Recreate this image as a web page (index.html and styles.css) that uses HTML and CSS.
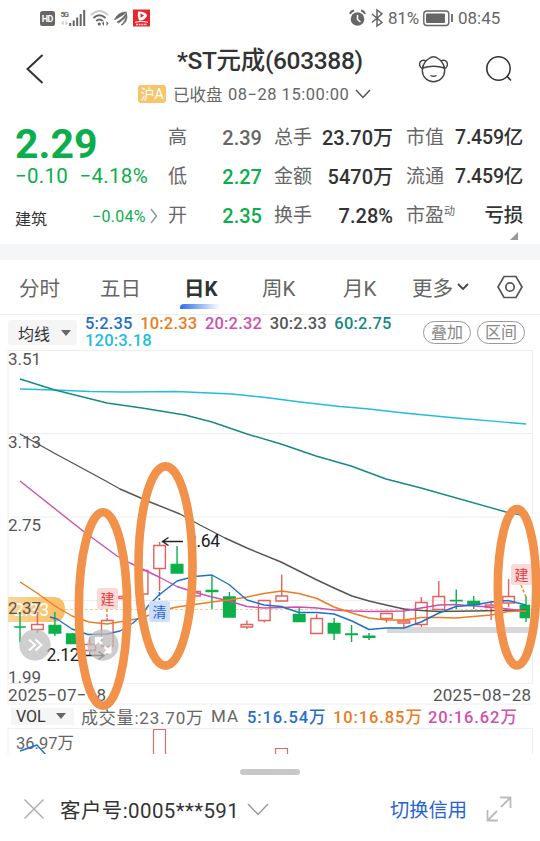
FILE: index.html
```html
<!DOCTYPE html>
<html lang="zh-CN">
<head>
    <meta charset="UTF-8">
    <meta name="viewport" content="width=device-width, initial-scale=1.0">
    <title>*ST元成(603388)</title>
    <link rel="stylesheet" href="styles.css">
</head>
<body>
    <div class="status-bar">
        <svg class="status-left" width="120" height="20" viewBox="36 8 120 20">
            <rect x="40" y="11" width="15" height="15" rx="2.5" fill="#666"/>
            <text x="41.8" y="22" class="hd" textLength="11.5">HD</text>
            <text x="60.5" y="17" class="five-g" textLength="8.5">5G</text>
            <path d="M61 23h3m-1-2v4m3-4v4m0-2h2" stroke="#ccc" fill="none"/>
            <path d="M70.2 23v3M73.7 20.5V26M77.2 17.5V26M80.7 14V26M84.2 10V26" stroke="#666" stroke-width="2" fill="none"/>
            <path d="M91 15q8.500-8 17 0" stroke="#ccc" stroke-width="2" fill="none"/>
            <path d="M93.500 18q6-5.500 12 0M96.300 21q3.200-3 6.400 0" stroke="#666" stroke-width="2" fill="none"/>
            <circle cx="99.300" cy="24" r="1.600" fill="#666"/>
            <path d="M104 21v5l-2-2.500zM106.500 21v5l2-2.500z" fill="#666"/>
            <path d="M114.500 19.500q4-8 12-7.500q-3 3-11 7.500zM117 22q6-3 9.500-9.500q1 5-8 10.500zM121 25q5-4 5.500-11q2 6-4 11z" fill="#666" stroke="#666" stroke-width=".6"/>
            <rect x="133" y="9.500" width="17" height="17" fill="#e8262b"/>
            <path d="M138 11.500q9 0 9 4.500q-3 5-8 4.500q-2-4-1-9z" fill="#fff"/>
            <path d="M140.500 13.500l3.500 2l-3.500 2.200z" fill="#e8262b"/>
            <path d="M135 22.300q6.500-2 13 0" stroke="#fff" fill="none"/>
            <path d="M136 24.600h11" stroke="#fff" stroke-width="1.500" stroke-dasharray="2 .6" opacity=".8"/>
        </svg>
        <div class="status-right">
            <svg width="36" height="20" viewBox="348 8 36 20">
                <circle cx="357.500" cy="19" r="6.800" fill="#666"/>
                <path d="M357.500 15v4.500l3 2.500" stroke="#fff" stroke-width="1.500" fill="none"/>
                <path d="M350 14q1-3 4-3.500M361 10.500q3 .5 4 3.500" stroke="#666" stroke-width="1.800" fill="none"/>
                <path d="M372 14l10 8.500l-5 3.500V10l5 3.800l-10 8.700" stroke="#666" stroke-width="1.500" fill="none"/>
            </svg>
            <span class="battery-pct">81%</span>
            <svg width="31" height="18" viewBox="422 9 31 18">
                <rect x="423.800" y="11" width="25" height="14.500" rx="3" fill="none" stroke="#666" stroke-width="1.400"/>
                <rect x="426" y="13.500" width="19" height="9.500" rx="1" fill="#666"/>
                <path d="M452 14v8" stroke="#666" stroke-width="1.800"/>
            </svg>
            <span class="clock">08:45</span>
        </div>
    </div>

    <header class="header">
        <svg class="back" width="20" height="32" viewBox="25 53 20 32">
            <path d="M42.500 55L27.500 69L42.500 83" stroke="#333" stroke-width="2" fill="none"/>
        </svg>
        <div class="title-box">
            <h1 class="title">*ST元成(603388)</h1>
            <div class="subtitle">
                <span class="market">沪A</span>
                <span class="state">已收盘</span>
                <span class="time">08−28 15:00:00</span>
                <svg width="16" height="10" viewBox="0 0 16 10"><path d="M1 1l7 7.500L15 1" stroke="#555" stroke-width="1.500" fill="none"/></svg>
            </div>
        </div>
        <svg class="avatar" width="30" height="28" viewBox="418 55 30 28" fill="none" stroke="#444" stroke-width="1.400">
            <circle cx="433.500" cy="70.500" r="11.200"/>
            <path d="M422.500 68q11-3.500 22 0q-2-7-6.500-9.500q-4.500-3.500-9 0q-4.500 2.500-6.500 9.500z" fill="#fff"/>
            <path d="M426 61c-3-2-6.500 0-6.500 3.500q.2 3 3 3.800M441 61c3-2 6.500 0 6.500 3.500q-.2 3-3 3.800M430.500 75.500q3 1.600 6 0"/>
        </svg>
        <svg class="search" width="28" height="28" viewBox="485 55 28 28" fill="none" stroke="#333" stroke-width="1.600">
            <circle cx="498.500" cy="68.500" r="11.700"/>
            <path d="M507 76.500l4 4"/>
        </svg>
    </header>

    <section class="quote">
        <div class="price-box">
            <div class="price">2.29</div>
            <div class="change"><span>−0.10</span><span>−4.18%</span></div>
            <div class="sector">
                <span class="sector-name">建筑</span>
                <span class="sector-change">−0.04%</span>
                <svg width="8" height="16" viewBox="0 0 8 16"><path d="M1 1l5.500 7L1 15" stroke="#999" stroke-width="1.500" fill="none"/></svg>
            </div>
        </div>
        <dl class="stats stats-price">
            <dt>高</dt><dd class="muted">2.39</dd>
            <dt>低</dt><dd class="green">2.27</dd>
            <dt>开</dt><dd class="green">2.35</dd>
        </dl>
        <dl class="stats stats-volume">
            <dt>总手</dt><dd>23.70万</dd>
            <dt>金额</dt><dd>5470万</dd>
            <dt>换手</dt><dd>7.28%</dd>
        </dl>
        <dl class="stats stats-value">
            <dt>市值</dt><dd>7.459亿</dd>
            <dt>流通</dt><dd>7.459亿</dd>
            <dt>市盈<sup>动</sup></dt><dd>亏损</dd>
        </dl>
        <span class="corner"></span>
    </section>

    <nav class="tabs">
        <a class="tab">分时</a>
        <a class="tab">五日</a>
        <a class="tab active">日K</a>
        <a class="tab">周K</a>
        <a class="tab">月K</a>
        <a class="tab more">更多
            <svg width="12" height="8" viewBox="0 0 12 8"><path d="M1 1l5 5l5-5" stroke="#444" stroke-width="1.800" fill="none"/></svg>
        </a>
        <svg class="settings" width="26" height="24" viewBox="497 275 26 24" fill="none" stroke="#555" stroke-width="1.700">
            <path d="M504 276.500h12l6 10.500l-6 10.500h-12l-6-10.500z"/>
            <circle cx="510" cy="287" r="4.200"/>
        </svg>
    </nav>

    <div class="ma-row">
        <div class="select ma-select">均线<i class="caret"></i></div>
        <div class="ma-values">
            <span class="c5">5:2.35</span>
            <span class="c10">10:2.33</span>
            <span class="c20">20:2.32</span>
            <span class="c30">30:2.33</span>
            <span class="c60">60:2.75</span>
            <span class="c120">120:3.18</span>
        </div>
        <div class="pills">
            <span class="pill">叠加</span>
            <span class="pill">区间</span>
        </div>
    </div>

    <svg class="chart" width="540" height="354" viewBox="0 350 540 354">
        <defs>
            <linearGradient id="flag" x1="0" x2="1">
                <stop offset="0" stop-color="#fbd796"/>
                <stop offset="1" stop-color="#f9bd68"/>
            </linearGradient>
        </defs>
        <path class="grid" d="M8 350.500H532.500M8 433.500H532.500M8 517H532.500M8 600.500H532.500M8 683.500H532.500M8 704H532.500M8 350V704M532.500 350V684"/>
        <path d="M8 597H53q12 0 12 12.500t-12 12.500H8z" fill="url(#flag)"/>
        <text class="flag-text" x="14" y="615.500" textLength="35">2.33</text>
        <path class="last-price" d="M65 609.500H532"/>
        <rect x="387" y="627" width="142" height="6" fill="#d8d8d8"/>

        <g id="candles"></g>

        <polyline class="line" stroke="#21bde0" points="20,389 55,390 90,391.500 125,392 176,391.500 232,394 270,398 300,402 340,406.500 369,409 404,413 456,418 526,424"/>
        <polyline class="line" stroke="#148a85" points="20,379 55,390 107,403 142,408 185,415 212,422 247,434 281,444 316,456 351,466 386,479 421,488 506,512 526,516"/>
        <polyline class="line" stroke="#555" points="20,434 54,453 104,480 120,489 150,502 180,514 200,525 225,538 247,548 281,562 299,571 317,580 334,588 352,596 369,601 386,605 404,609 421,610.500 439,611.500 474,611 526,610"/>
        <polyline class="line" stroke="#cf4fb0" points="20,481 83,531 117,556 130,563 159,577 177,586.500 194,592 212,597 229,601 247,606.500 264,608 281,607.500 299,607 317,608 334,610 352,611 369,611.500 404,611 421,608 439,605 456,604.500 474,606 491,607 508,609 526,611"/>
        <polyline class="line" stroke="#ea7c22" points="20,582 37,593 55,606 72,616 89,622 107,624 125,621 142,618 159,611 177,607 212,602 229,600 247,597 264,593.500 281.600,591 299,593.500 317,598.500 334,607 352,613 369,618 386,620 404,620 421,617.500 439,617.500 456,618 491,615 508,611.500 526,611"/>
        <polyline class="line" stroke="#1f6fc9" points="50,617 57,619 72,629 88,634.500 107,634 120,631 133,623 142,615 148,606 159,595 177,581 194,576.500 212,575 229,584.500 247,600 264,605 281,606.500 299,612.500 317,612.500 334,614 352,621 369,629.500 386,628 404,628 421,622 439,613 456,606.500 474,605 491,602 508,600.500 526,605"/>

        <g class="axis">
            <text x="8" y="364.500" textLength="33">3.51</text>
            <text x="8" y="448" textLength="33">3.13</text>
            <text x="8" y="530.500" textLength="33">2.75</text>
            <text x="8" y="613.500" textLength="33">2.37</text>
            <text x="8" y="683" textLength="33">1.99</text>
            <text x="8" y="700.500" textLength="98">2025−07−18</text>
            <text x="433" y="700.500" textLength="98">2025−08−28</text>
        </g>

        <text class="extreme" x="46.500" y="661" textLength="33">2.12</text>
        <path class="arrow" d="M80 655.500H104M98.500 651.500l5.500 4l-5.500 4"/>
        <text class="extreme" x="187" y="547" textLength="33">2.64</text>
        <path class="arrow" d="M183 541.500H163M168.500 537.500l-6 4l6 4"/>

        <circle cx="35" cy="645" r="15.700" fill="#bbb" opacity=".7"/>
        <path d="M29 639.500l6 5.500l-6 5.500M35.500 639.500l6 5.500l-6 5.500" stroke="#fff" stroke-width="2" fill="none"/>
        <circle cx="103" cy="645" r="15.700" fill="#bbb" opacity=".75"/>
        <path d="M97 639l5 5M104.500 646.500l5 5" stroke="#fff" stroke-width="2.500"/>
        <path d="M95 637h8.500l-8.500 8.500zM111.500 653.500h-8.500l8.500-8.500z" fill="#fff"/>

        <path class="lead" d="M107 609V620M521 585L526 597"/>
        <path d="M159.400 592V600" stroke="#1f6fc9" stroke-width="1.500" stroke-dasharray="4 2"/>
        <g class="mark">
            <rect x="97" y="588" width="21" height="21" rx="2.500" fill="#fcd9d9"/>
            <text x="107.500" y="604" fill="#e23b3b">建</text>
            <rect x="149" y="601" width="21" height="21" rx="2.500" fill="#cfdffb"/>
            <text x="159.500" y="617" fill="#2563d9">清</text>
            <rect x="511" y="564" width="21" height="21" rx="2.500" fill="#fcd9d9"/>
            <text x="521.500" y="580" fill="#e23b3b">建</text>
        </g>

        <g class="circles">
            <ellipse cx="103" cy="609" rx="24.200" ry="96.700"/>
            <ellipse cx="165.500" cy="566" rx="27" ry="99.600"/>
            <ellipse cx="517" cy="587.200" rx="19.200" ry="78.200"/>
        </g>
    </svg>

    <div class="vol-row">
        <div class="select vol-select">VOL<i class="caret"></i></div>
        <span class="vol-total">成交量:23.70万</span>
        <span class="vol-ma">MA</span>
        <span class="c5">5:16.54万</span>
        <span class="c10">10:16.85万</span>
        <span class="c20">20:16.62万</span>
    </div>
    <svg class="vol-chart" width="540" height="26" viewBox="0 728 540 26">
        <path class="grid" d="M8 728.500H532.500M8 728V754M532.500 728V754"/>
        <g fill="none" stroke="#d9706c" stroke-width="1.200">
            <path d="M153.500 755V729.500H165.500V755M275.500 755V748.500H287.500V755"/>
        </g>
        <text class="vol-max" x="16" y="749" textLength="58">36.97万</text>
        <polyline class="line" stroke="#1f6fc9" points="20,751 37,745 46,755"/>
    </svg>

    <footer class="sheet">
        <div class="handle"></div>
        <div class="account">
            <svg width="20" height="20" viewBox="0 0 20 20"><path d="M.5.5l19 19M19.500.5l-19 19" stroke="#aaa" stroke-width="1.400"/></svg>
            <span class="account-no">客户号:0005***591</span>
            <svg width="22" height="13" viewBox="0 0 22 13"><path d="M1 1l10 10.500L21 1" stroke="#999" stroke-width="1.400" fill="none"/></svg>
            <a class="switch">切换信用</a>
            <svg width="26" height="26" viewBox="0 0 26 26"><path d="M14 1.500h10.500V12M24 2L15 11M1.500 14v10.500H12M2 24l9-9" stroke="#bbb" stroke-width="1.800" fill="none"/></svg>
        </div>
    </footer>

    <script src="chart.js"></script>
</body>
</html>
```

FILE: styles.css
```css
* {
    box-sizing: border-box;
}
body {
    margin: 0;
    width: 540px;
    height: 841px;
    overflow: hidden;
    background: #fff;
    color: #333;
    font-family: Roboto, "Noto Sans CJK SC", sans-serif;
}
svg {
    display: block;
    flex: none;
}
span, a {
    white-space: nowrap;
}

/* status bar */
.status-bar {
    display: flex;
    justify-content: space-between;
    align-items: center;
    height: 36px;
    padding: 0 39px 0 36px;
}
.status-right {
    display: flex;
    align-items: center;
    color: #666;
    font-size: 17px;
}
.battery-pct {
    width: 34px;
    margin-left: 4px;
    letter-spacing: -0.2px;
}
.clock {
    width: 43px;
    margin-left: 5px;
}
.hd {
    font-size: 9px;
    font-weight: 700;
    fill: #fff;
}
.five-g {
    font-size: 8px;
    font-weight: 700;
    fill: #666;
}

/* header */
.header {
    display: flex;
    align-items: flex-start;
    height: 81px;
    padding-left: 25px;
}
.back {
    margin-top: 17px;
}
.title-box {
    width: 250px;
    margin-left: 85px;
    padding-left: 8px;
}
.title {
    margin: 7px 0 0 39px;
    font-size: 24.5px;
    line-height: 36px;
    font-weight: 500;
    letter-spacing: -0.35px;
    white-space: nowrap;
}
.subtitle {
    display: flex;
    align-items: center;
    height: 20px;
    margin-top: 5px;
    color: #666;
    font-size: 16.5px;
}
.market {
    width: 28px;
    height: 18px;
    border-radius: 3px;
    background: #f7c66c;
    color: #fff;
    font-size: 14px;
    line-height: 18px;
    text-align: center;
}
.state {
    width: 48px;
    margin-left: 7px;
}
.time {
    width: 122px;
    margin: 0 5px 0 7px;
    letter-spacing: 0.5px;
}
.avatar {
    margin: 19px 0 0 38px;
}
.search {
    margin: 19px 0 0 37px;
}

/* quote */
.quote {
    display: flex;
    position: relative;
    height: 127px;
    padding-left: 15px;
}
.price-box {
    width: 145px;
    color: #0bae4c;
}
.price {
    height: 42px;
    margin-top: 6px;
    font-size: 41px;
    line-height: 42px;
    font-weight: 700;
}
.change {
    display: flex;
    justify-content: space-between;
    width: 133px;
    font-size: 20.5px;
    line-height: 22px;
    letter-spacing: 0.3px;
}
.sector {
    display: flex;
    align-items: center;
    height: 24px;
    margin-top: 17px;
    font-size: 16px;
}
.sector-name {
    width: 77px;
    padding-top: 3px;
    color: #333;
}
.sector-change {
    width: 58px;
    letter-spacing: 0.3px;
}
.stats {
    display: grid;
    grid-template-columns: auto 1fr;
    grid-template-rows: 39px 39px 39px;
    align-items: center;
    margin: 0;
    padding-top: 1px;
    line-height: 30px;
}
.stats-price {
    width: 94px;
    margin-left: 8px;
}
.stats-volume {
    width: 119px;
    margin-left: 12px;
}
.stats-value {
    width: 115px;
    margin-left: 13px;
}
.stats dt {
    color: #666;
    font-size: 19px;
    white-space: nowrap;
}
.stats dt sup {
    font-size: 11px;
    line-height: 10px;
}
.stats dd {
    margin: 0;
    font-size: 20px;
    font-weight: 500;
    text-align: right;
    white-space: nowrap;
}
.stats-value dd {
    font-size: 19.5px;
    letter-spacing: -0.2px;
}
.stats .muted {
    color: #666;
}
.stats .green {
    color: #0bae4c;
}
.corner {
    position: absolute;
    right: 22px;
    bottom: 4px;
    border-left: 8px solid transparent;
    border-bottom: 8px solid #999;
}

/* period tabs */
.tabs {
    display: flex;
    align-items: center;
    height: 71px;
    padding: 16px 0 0 19px;
    border-bottom: 1px solid #eee;
    background: linear-gradient(#f5f6f8 16px, #fff 16px);
    color: #666;
    font-size: 20.5px;
}
.tab {
    display: flex;
    align-items: center;
    position: relative;
    width: 81px;
    height: 54px;
}
.tab.active {
    padding-left: 3px;
    color: #333;
    font-weight: 700;
}
.tab.active::after {
    content: "";
    position: absolute;
    left: -1px;
    bottom: 5px;
    width: 40px;
    height: 5px;
    border-radius: 4px 0 0 0;
    background: linear-gradient(90deg, #2b6cf0, #fff);
}
.tab.more {
    width: 73px;
    gap: 4px;
    margin-left: -12px;
}
.settings {
    margin-left: 12px;
}

/* average lines */
.ma-row {
    display: flex;
    height: 35px;
    padding-left: 8px;
}
.select {
    display: flex;
    align-items: center;
    background: #f5f5f5;
    color: #333;
}
.caret {
    border: 5px solid transparent;
    border-top: 6px solid #666;
    border-bottom: 0;
}
.ma-select {
    justify-content: space-between;
    width: 69px;
    height: 25px;
    margin-top: 5px;
    padding: 0 6px 0 10px;
    border-radius: 3px;
    font-size: 16px;
}
.ma-values {
    display: flex;
    flex-wrap: wrap;
    column-gap: 7.5px;
    width: 330px;
    height: 34px;
    margin-left: 8px;
    font-size: 16.5px;
    line-height: 17px;
    letter-spacing: 0.2px;
}
.ma-values span {
    font-weight: 500;
}
.c5 { color: #1f6fc9; }
.c10 { color: #ea7c22; }
.c20 { color: #cf4fb0; }
.c30 { color: #555; }
.c60 { color: #148a85; }
.c120 { color: #21bde0; }
.pills {
    display: flex;
    gap: 6px;
    margin: 6px 0 0 8px;
}
.pill {
    width: 48px;
    height: 23px;
    border: 1px solid #999;
    border-radius: 12px;
    color: #888;
    font-size: 16px;
    line-height: 22px;
    text-align: center;
}

/* candle chart */
.chart {
    position: relative;
    z-index: 1;
    overflow: visible;
}
.grid {
    fill: none;
    stroke: #eee;
}
.last-price {
    stroke: #f5cf9a;
    stroke-dasharray: 3 2;
}
.line {
    fill: none;
    stroke-width: 1.4;
    stroke-linejoin: round;
}
.axis text {
    fill: #555;
    font-size: 17px;
}
.flag-text {
    fill: #fff;
    font-size: 17.5px;
}
.extreme {
    fill: #222;
    font-size: 17.5px;
}
.arrow {
    fill: none;
    stroke: #222;
    stroke-width: 1.4;
}
.lead {
    stroke: #e28a2d;
    stroke-width: 1.5;
    stroke-dasharray: 3 2;
}
.mark text {
    font-size: 14px;
    text-anchor: middle;
}
.circles ellipse {
    fill: none;
    stroke: #f1914a;
    stroke-width: 8.6;
}
.up {
    fill: none;
    stroke: #e8605c;
    stroke-width: 1.4;
}
.down {
    fill: #0bb04a;
    stroke: #0bb04a;
    stroke-width: 1.4;
}

/* volume */
.vol-row {
    display: flex;
    align-items: center;
    height: 24px;
    padding-left: 11px;
    font-size: 16.5px;
}
.vol-row .c5,
.vol-row .c10,
.vol-row .c20 {
    font-weight: 500;
    letter-spacing: 0.9px;
}
.vol-select {
    justify-content: space-between;
    width: 63px;
    height: 17px;
    padding: 0 8px 0 5px;
    font-size: 16px;
}
.vol-total {
    width: 124px;
    margin-left: 7px;
    color: #666;
    font-size: 17px;
    letter-spacing: 0.8px;
}
.vol-ma {
    width: 28px;
    margin: 0 8px 0 6px;
    color: #666;
    font-size: 17px;
    letter-spacing: 1px;
}
.vol-row .c5 {
    width: 86px;
}
.vol-row .c10 {
    width: 95px;
}
.vol-max {
    fill: #666;
    font-size: 16.5px;
}

/* bottom sheet */
.sheet {
    height: 87px;
    padding-top: 15px;
}
.handle {
    width: 60px;
    height: 6px;
    margin: 0 auto;
    border-radius: 3px;
    background: #c8c8c8;
}
.account {
    display: flex;
    align-items: center;
    height: 34px;
    margin-top: 17px;
    padding-left: 24px;
}
.account-no {
    width: 180px;
    margin: 0 7px 0 16px;
    font-size: 20.5px;
    letter-spacing: 0.4px;
}
.switch {
    width: 78px;
    margin: 0 18px 0 121px;
    color: #2463d6;
    font-size: 19.3px;
}
```

FILE: chart.js
```js
// [color, high, body top, body bottom, low] for each trading day
const candles = [
    ['down', 612, 627, 627, 642],
    ['up', 612, 624.5, 629.5, 633],
    ['down', 612, 625.5, 633, 636],
    ['down', 633, 634, 643.5, 644],
    ['up', 637, 644.5, 650.5, 655],
    ['up', 618, 620.5, 646.5, 655],
    ['up', 596, 596.5, 598.5, 599],
    ['up', 570, 570.5, 594, 594],
    ['up', 542, 545.5, 568.5, 591],
    ['down', 546, 564.5, 573, 573],
    ['up', 591, 591.5, 596, 596],
    ['down', 575, 590.5, 591.5, 609],
    ['down', 592, 597, 617, 617],
    ['up', 620.5, 624.5, 627, 629],
    ['up', 600, 600.5, 620.5, 622.5],
    ['up', 574.5, 596, 601, 601],
    ['down', 608, 614.5, 621.5, 622],
    ['up', 614, 618.5, 633.5, 634],
    ['down', 618, 623.5, 633, 640],
    ['down', 625, 634, 634.5, 642],
    ['down', 633, 636.3, 637.2, 640],
    ['up', 613, 613.5, 618.5, 622.5],
    ['up', 608, 621, 623, 628],
    ['up', 597, 602.5, 624.5, 627],
    ['up', 581, 596.5, 609.5, 610],
    ['down', 589.5, 600.5, 600.7, 609],
    ['down', 596, 601.5, 604.5, 609],
    ['up', 601, 605, 607.5, 620],
    ['up', 579, 596.5, 603, 607],
    ['down', 596, 605.5, 617.5, 622]
];

const step = 17.45;
let html = '';
candles.forEach(([type, high, top, bottom, low], i) => {
    const x = 20 + i * step;
    const right = Math.min(x + 5.8, 529.5);
    html += `<path class="${type}" d="M${x} ${high}V${top}M${x} ${bottom}V${low}M${x - 5.8} ${top}H${right}V${bottom}H${x - 5.8}Z"/>`;
});
document.getElementById('candles').innerHTML = html;
```
